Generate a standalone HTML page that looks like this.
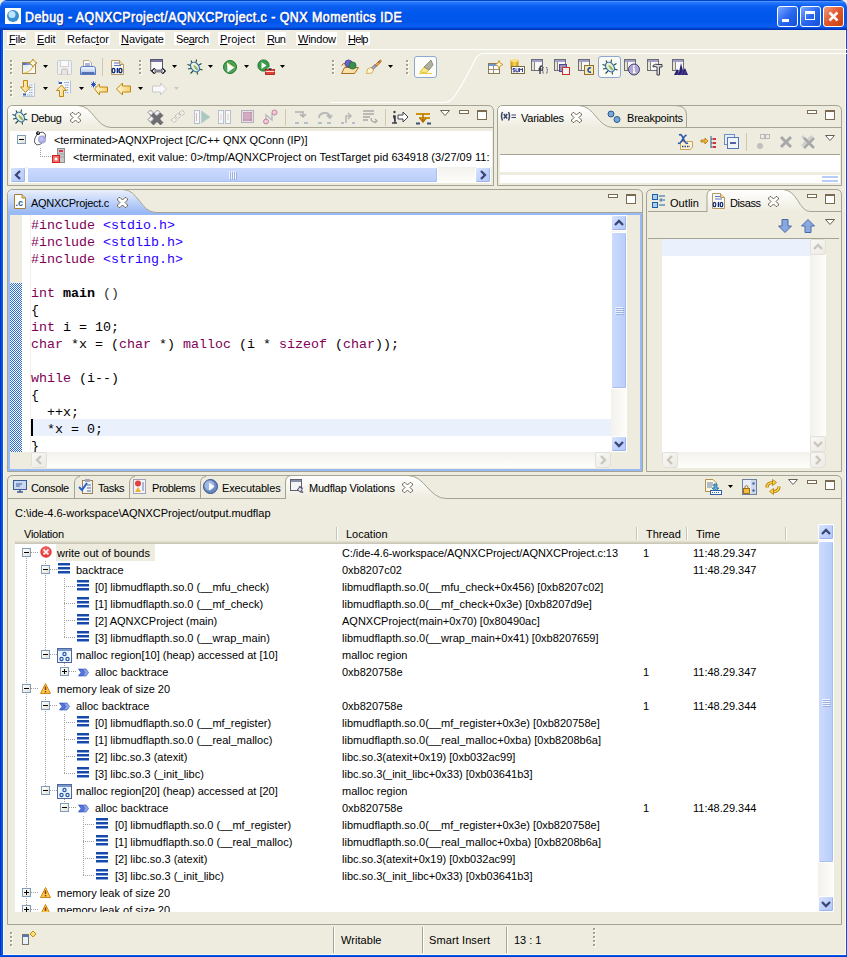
<!DOCTYPE html><html><head><meta charset="utf-8"><style>
html,body{margin:0;padding:0}
body{width:847px;height:957px;overflow:hidden;position:relative;background:#EEECDF;font-family:"Liberation Sans",sans-serif;font-size:11px;color:#000}
body div, body span, body svg{position:absolute}
.t{white-space:pre;line-height:13px}
.m{font-family:"Liberation Mono",monospace;font-size:13.33px;white-space:pre;line-height:17px}
</style></head><body>
<div style="left:0px;top:0px;width:847px;height:30px;background:linear-gradient(#0044CC 0px,#0044CC 1px,#4A90FF 1px,#4A90FF 2px,#2C7BFF 2px,#1A6EF8 4px,#0A5EF0 6px,#0057EC 14px,#0056EA 22px,#0A5EF2 26px,#0050E0 28px,#0038C0 29px,#0030B0 30px);border-radius:7px 7px 0 0"></div>
<svg style="left:5px;top:8px;" width="16" height="16" viewBox="0 0 16 16"><rect x="0" y="0" width="16" height="16" fill="#fff"/><circle cx="8" cy="8" r="6" fill="#3a8fd0"/><circle cx="7" cy="6.5" r="3.5" fill="#bfe6ff"/></svg>
<span class="t" style="left:25px;top:9px;font-weight:normal;-webkit-text-stroke:0.6px #fff;font-size:14px;color:#fff;line-height:16px;text-shadow:1px 1px 0 #0A1E80;letter-spacing:0.5px;transform:scaleX(0.891);transform-origin:0 0">Debug - AQNXCProject/AQNXCProject.c - QNX Momentics IDE</span>
<div style="left:777px;top:6px;width:21px;height:21px;background:linear-gradient(135deg,#7DA8FF,#2A68F0 50%,#1450D8);border:1px solid #fff;border-radius:3px;box-sizing:border-box"></div>
<div style="left:782px;top:19px;width:7px;height:3px;background:#fff"></div>
<div style="left:800px;top:6px;width:21px;height:21px;background:linear-gradient(135deg,#7DA8FF,#2A68F0 50%,#1450D8);border:1px solid #fff;border-radius:3px;box-sizing:border-box"></div>
<div style="left:805px;top:11px;width:10px;height:9px;border:1px solid #fff;border-top-width:3px;box-sizing:border-box"></div>
<div style="left:823px;top:6px;width:21px;height:21px;background:linear-gradient(135deg,#F29C7D,#E0562A 50%,#C9400F);border:1px solid #fff;border-radius:3px;box-sizing:border-box"></div>
<svg style="left:828px;top:11px;" width="11" height="11" viewBox="0 0 11 11"><path d="M1.5 1.5L9.5 9.5M9.5 1.5L1.5 9.5" stroke="#fff" stroke-width="2.5"/></svg>
<div style="left:0px;top:30px;width:3px;height:927px;background:linear-gradient(90deg,#0030B8 0,#0030B8 1px,#0058EE 1px)"></div>
<div style="left:3px;top:30px;width:1px;height:923px;background:#FCF8EC"></div>
<div style="left:846px;top:30px;width:1px;height:927px;background:#0050E8"></div>
<div style="left:845px;top:30px;width:1px;height:925px;background:#FCF8EC"></div>
<div style="left:3px;top:954px;width:843px;height:1px;background:#FCF8EC"></div>
<div style="left:0px;top:955px;width:847px;height:2px;background:linear-gradient(#0058EE 0,#0058EE 1px,#0040D0 1px)"></div>
<div style="left:7px;top:32px;width:19px;height:13px;background:#fff"></div>
<span class="t" style="left:9px;top:33px;color:#000;letter-spacing:-0.250px"><u>F</u>ile</span>
<div style="left:35px;top:32px;width:21px;height:13px;background:#fff"></div>
<span class="t" style="left:37px;top:33px;color:#000;letter-spacing:-0.156px"><u>E</u>dit</span>
<div style="left:65px;top:32px;width:45px;height:13px;background:#fff"></div>
<span class="t" style="left:67px;top:33px;color:#000;letter-spacing:0.058px">Refac<u>t</u>or</span>
<div style="left:119px;top:32px;width:46px;height:13px;background:#fff"></div>
<span class="t" style="left:121px;top:33px;color:#000;letter-spacing:-0.062px"><u>N</u>avigate</span>
<div style="left:174px;top:32px;width:36px;height:13px;background:#fff"></div>
<span class="t" style="left:176px;top:33px;color:#000;letter-spacing:-0.375px">Se<u>a</u>rch</span>
<div style="left:218px;top:32px;width:38px;height:13px;background:#fff"></div>
<span class="t" style="left:220px;top:33px;color:#000;letter-spacing:0.125px"><u>P</u>roject</span>
<div style="left:265px;top:32px;width:21px;height:13px;background:#fff"></div>
<span class="t" style="left:267px;top:33px;color:#000;letter-spacing:-0.602px"><u>R</u>un</span>
<div style="left:296px;top:32px;width:41px;height:13px;background:#fff"></div>
<span class="t" style="left:298px;top:33px;color:#000;letter-spacing:-0.228px"><u>W</u>indow</span>
<div style="left:346px;top:32px;width:24px;height:13px;background:#fff"></div>
<span class="t" style="left:348px;top:33px;color:#000;letter-spacing:-0.714px"><u>H</u>elp</span>
<div style="left:4px;top:49px;width:839px;height:1px;background:#fff"></div>
<div style="left:10px;top:60px;width:2px;height:2px;background:#A6A08B;box-shadow:1px 1px 0 #fff"></div>
<div style="left:10px;top:64px;width:2px;height:2px;background:#A6A08B;box-shadow:1px 1px 0 #fff"></div>
<div style="left:10px;top:68px;width:2px;height:2px;background:#A6A08B;box-shadow:1px 1px 0 #fff"></div>
<div style="left:10px;top:72px;width:2px;height:2px;background:#A6A08B;box-shadow:1px 1px 0 #fff"></div>
<div style="left:10px;top:82px;width:2px;height:2px;background:#A6A08B;box-shadow:1px 1px 0 #fff"></div>
<div style="left:10px;top:86px;width:2px;height:2px;background:#A6A08B;box-shadow:1px 1px 0 #fff"></div>
<div style="left:10px;top:90px;width:2px;height:2px;background:#A6A08B;box-shadow:1px 1px 0 #fff"></div>
<div style="left:10px;top:94px;width:2px;height:2px;background:#A6A08B;box-shadow:1px 1px 0 #fff"></div>
<div style="left:139px;top:60px;width:2px;height:2px;background:#A6A08B;box-shadow:1px 1px 0 #fff"></div>
<div style="left:139px;top:64px;width:2px;height:2px;background:#A6A08B;box-shadow:1px 1px 0 #fff"></div>
<div style="left:139px;top:68px;width:2px;height:2px;background:#A6A08B;box-shadow:1px 1px 0 #fff"></div>
<div style="left:139px;top:72px;width:2px;height:2px;background:#A6A08B;box-shadow:1px 1px 0 #fff"></div>
<div style="left:332px;top:60px;width:2px;height:2px;background:#A6A08B;box-shadow:1px 1px 0 #fff"></div>
<div style="left:332px;top:64px;width:2px;height:2px;background:#A6A08B;box-shadow:1px 1px 0 #fff"></div>
<div style="left:332px;top:68px;width:2px;height:2px;background:#A6A08B;box-shadow:1px 1px 0 #fff"></div>
<div style="left:332px;top:72px;width:2px;height:2px;background:#A6A08B;box-shadow:1px 1px 0 #fff"></div>
<div style="left:406px;top:60px;width:2px;height:2px;background:#A6A08B;box-shadow:1px 1px 0 #fff"></div>
<div style="left:406px;top:64px;width:2px;height:2px;background:#A6A08B;box-shadow:1px 1px 0 #fff"></div>
<div style="left:406px;top:68px;width:2px;height:2px;background:#A6A08B;box-shadow:1px 1px 0 #fff"></div>
<div style="left:406px;top:72px;width:2px;height:2px;background:#A6A08B;box-shadow:1px 1px 0 #fff"></div>
<svg style="left:22px;top:58px;" width="16" height="17" viewBox="0 0 16 17"><defs><linearGradient id="nwt" x1="0" x2="1"><stop offset="0" stop-color="#3A6AC0"/><stop offset="1" stop-color="#C8D8F0"/></linearGradient><linearGradient id="nwf" x1="0" y1="0" x2="1" y2="1"><stop offset="0" stop-color="#D8E8F8"/><stop offset="1" stop-color="#FFFFFF"/></linearGradient></defs><rect x="0.5" y="4.5" width="13" height="11" fill="url(#nwf)" stroke="#A88848"/><rect x="1" y="5" width="12" height="2" fill="url(#nwt)"/><path d="M2 15Q9 14 11 8" stroke="#F0C860" fill="none" stroke-width="1.2"/><path d="M11 1L12.5 3.5L15 5L12.5 6.5L11 9L9.5 6.5L7 5L9.5 3.5Z" fill="#FFF8E0" stroke="#B88010" stroke-width="0.9"/></svg>
<svg style="left:43px;top:65px;" width="5" height="3" viewBox="0 0 5 3"><path d="M0 0H5L2.5 3Z" fill="#000"/></svg>
<svg style="left:57px;top:60px;" width="15" height="15" viewBox="0 0 15 15"><rect x="0.5" y="0.5" width="14" height="14" rx="1" fill="#F0F0F0" stroke="#C4CCD8"/><rect x="3.5" y="0.5" width="8" height="6" fill="#FAFAFA" stroke="#D0D0D8"/><path d="M4.5 14.5V10.5Q4.5 9 6 9H9Q10.5 9 10.5 10.5V14.5" fill="#E8E4E0" stroke="#C8B8B8"/></svg>
<svg style="left:80px;top:60px;" width="16" height="15" viewBox="0 0 16 15"><defs><linearGradient id="prb" x1="0" y1="0" x2="0" y2="1"><stop offset="0" stop-color="#F4F8FF"/><stop offset="0.6" stop-color="#C8D8F4"/><stop offset="1" stop-color="#5878C0"/></linearGradient></defs><path d="M3.5 0.5H9L11.5 3V8.5H3.5Z" fill="#fff" stroke="#B8A888"/><path d="M5 4H10M5 6H10" stroke="#5070B8" stroke-width="1.2"/><path d="M0.5 8.5Q0.5 6.5 2.5 6.5H13.5Q15.5 6.5 15.5 8.5V14.5H0.5Z" fill="url(#prb)" stroke="#5C7CC0"/><path d="M2 13H14" stroke="#4060A8" stroke-width="1.5"/></svg>
<div style="left:102px;top:58px;width:1px;height:18px;background:#D2C6AC"></div>
<svg style="left:111px;top:60px;" width="15" height="15" viewBox="0 0 15 15"><path d="M0.5 0.5H8.5L12.5 4.5V14.5H0.5Z" fill="#F8F8F4" stroke="#B89860"/><path d="M8.5 0.5V4.5H12.5" fill="#F0D8A0" stroke="#B89860"/><path d="M3 3H8M3 5.5H10" stroke="#5878C0" stroke-width="1.1"/><ellipse cx="2.5" cy="10.5" rx="1.4" ry="2.2" fill="none" stroke="#102878" stroke-width="1.3"/><path d="M6.5 8V13" stroke="#102878" stroke-width="1.6"/><ellipse cx="9.5" cy="10.5" rx="1.4" ry="2.2" fill="none" stroke="#102878" stroke-width="1.3"/></svg>
<svg style="left:150px;top:59px;" width="17" height="15" viewBox="0 0 17 15"><rect x="0.5" y="0.5" width="12" height="11" fill="#FAFAFA" stroke="#585868"/><rect x="1" y="1" width="11" height="2" fill="#7878A8"/><path d="M1 3V11" stroke="#B8B8A0"/><path d="M2.5 12H14.5M5 9.5L2.5 12L5 14.5M12 9.5L14.5 12L12 14.5" stroke="#202030" stroke-width="2.4" fill="none"/><path d="M3 12H14M5 10.5L3 12L5 13.5M12 10.5L14 12L12 13.5" stroke="#fff" stroke-width="0.9" fill="none"/></svg>
<svg style="left:172px;top:65px;" width="5" height="3" viewBox="0 0 5 3"><path d="M0 0H5L2.5 3Z" fill="#000"/></svg>
<svg style="left:187px;top:59px;" width="16" height="16" viewBox="0 0 16 16"><path d="M4 1.5L5.5 4.5M9.5 0.5L9 3.5M0.5 5.5L3.5 6.5M14.5 4.5L12 6M1 10L4 9.5M15.5 11L12.5 10M3.5 14.5L6 12M10.5 15.5L10 12.5" stroke="#1A4A2A" stroke-width="1.1"/><ellipse cx="8" cy="8" rx="3.8" ry="5.4" transform="rotate(-40 8 8)" fill="#F0F0D0" stroke="#2A68B0" stroke-width="1.1"/><ellipse cx="8.8" cy="8.8" rx="1.1" ry="3.2" transform="rotate(-40 8.8 8.8)" fill="#88B878"/></svg>
<svg style="left:208px;top:65px;" width="5" height="3" viewBox="0 0 5 3"><path d="M0 0H5L2.5 3Z" fill="#000"/></svg>
<svg style="left:223px;top:60px;" width="15" height="15" viewBox="0 0 15 15"><circle cx="7" cy="7" r="6.5" fill="#3A9A4A" stroke="#1E7A30"/><circle cx="7" cy="7" r="5" fill="none" stroke="#68B070" stroke-width="0.8"/><path d="M4 2.5L11.5 7.5L4.5 12.5Z" fill="#fff"/><path d="M4 2.5L11.5 7.5" stroke="#E8C040" stroke-width="0.8"/></svg>
<svg style="left:244px;top:65px;" width="5" height="3" viewBox="0 0 5 3"><path d="M0 0H5L2.5 3Z" fill="#000"/></svg>
<svg style="left:257px;top:59px;" width="18" height="16" viewBox="0 0 18 16"><circle cx="6.5" cy="6.5" r="5.6" fill="#3A9A4A" stroke="#1E7A30"/><path d="M4.5 3L9.5 6.5L4.5 10Z" fill="#fff"/><rect x="8.5" y="10.5" width="9" height="5" fill="#E04038" stroke="#A01810" stroke-width="0.8"/><path d="M11 10.5V9H15V10.5M8.5 12.5H17.5" stroke="#fff" stroke-width="0.8"/></svg>
<svg style="left:280px;top:65px;" width="5" height="3" viewBox="0 0 5 3"><path d="M0 0H5L2.5 3Z" fill="#000"/></svg>
<svg style="left:341px;top:59px;" width="18" height="15" viewBox="0 0 18 15"><path d="M0.5 6.5L2.5 4.5H7L8 6.5H13.5V9" fill="#F0D8A0" stroke="#A87020"/><path d="M0.5 14.5L3.5 8.5H17.5L13.5 14.5Z" fill="#F8E0A8" stroke="#A87020"/><circle cx="7.5" cy="4.5" r="3.6" fill="#6A60C8" stroke="#403890" stroke-width="0.7"/><circle cx="11.5" cy="6.5" r="3.6" fill="#3A9050" stroke="#206030" stroke-width="0.7"/></svg>
<svg style="left:366px;top:59px;" width="16" height="15" viewBox="0 0 16 15"><path d="M9 6L14 1Q16 1 15 3L10 8Z" fill="#F0A040" stroke="#C07010" stroke-width="0.8"/><path d="M5 9L9 5.5L10.5 7L7 11Z" fill="#A8A0C0" stroke="#707080" stroke-width="0.8"/><path d="M0.5 14.5L1.5 10L5 8.5L7.5 11L6 14Z" fill="#FFF8D0" stroke="#D0A040" stroke-width="0.8"/><circle cx="13" cy="3" r="0.8" fill="#2050A0"/></svg>
<svg style="left:388px;top:65px;" width="5" height="3" viewBox="0 0 5 3"><path d="M0 0H5L2.5 3Z" fill="#000"/></svg>
<div style="left:414px;top:56px;width:23px;height:22px;background:#FCFCFA;border:1px solid #8CA8D0;border-radius:3px;box-sizing:border-box"></div>
<svg style="left:418px;top:59px;" width="16" height="15" viewBox="0 0 16 15"><path d="M2 13L6 8L11 11L8 14Z" fill="#F8E880" stroke="#D8B830" stroke-width="0.8"/><path d="M6 8L13 1L15 6L11 11Z" fill="#B0B0A0" stroke="#808070" stroke-width="0.8"/><path d="M1 14.5H14" stroke="#E8D040" stroke-width="1.2"/></svg>
<svg style="left:20px;top:80px;" width="16" height="17" viewBox="0 0 16 17"><defs><linearGradient id="ag1" x1="0" y1="0" x2="1" y2="0"><stop offset="0" stop-color="#FFF8D8"/><stop offset="1" stop-color="#F8D070"/></linearGradient></defs><rect x="2.5" y="3.5" width="12" height="13" fill="#F4F8FC"/><path d="M14.5 3V16.5M2.5 16.5H14.5" stroke="#B8C4D4"/><path d="M9 5H13M9 7.5H13M9 10H13M9 12.5H13M7 15H13" stroke="#90A8D0" stroke-dasharray="1.5 0.5"/><rect x="3" y="13.5" width="3" height="2" fill="#3060B0"/><path d="M3.5 0.5H7.5V7H10.5L5.5 12.5L0.5 7H3.5Z" fill="url(#ag1)" stroke="#C08810"/></svg>
<svg style="left:43px;top:87px;" width="5" height="3" viewBox="0 0 5 3"><path d="M0 0H5L2.5 3Z" fill="#000"/></svg>
<svg style="left:56px;top:80px;" width="16" height="17" viewBox="0 0 16 17"><defs><linearGradient id="ag2" x1="0" y1="0" x2="1" y2="0"><stop offset="0" stop-color="#FFF8D8"/><stop offset="1" stop-color="#F8D070"/></linearGradient></defs><rect x="2.5" y="0.5" width="12" height="13" fill="#F4F8FC"/><path d="M14.5 0.5V13.5M2.5 0.5V4" stroke="#B8C4D4"/><rect x="3" y="2" width="3" height="2" fill="#3060B0"/><path d="M8 2.5H13M9 5H13M9 7.5H13M9 10H13M9 12.5H13" stroke="#90A8D0" stroke-dasharray="1.5 0.5"/><path d="M3.5 16.5V10.5H0.5L5.5 5L10.5 10.5H7.5V16.5Z" fill="url(#ag2)" stroke="#C08810"/></svg>
<svg style="left:79px;top:87px;" width="5" height="3" viewBox="0 0 5 3"><path d="M0 0H5L2.5 3Z" fill="#000"/></svg>
<svg style="left:91px;top:81px;" width="17" height="15" viewBox="0 0 17 15"><defs><linearGradient id="ag3" x1="0" y1="0" x2="1" y2="0"><stop offset="0" stop-color="#FFF8D8"/><stop offset="1" stop-color="#F8D070"/></linearGradient></defs><path d="M0.5 1.5L4.5 5.5M2.5 0.5V6.5M0 3.5H5M4.5 1.5L0.5 5.5" stroke="#2850C0" stroke-width="1"/><path d="M3.5 8L8.5 3V6H16.5V11H8.5V14Z" fill="url(#ag3)" stroke="#C08810"/></svg>
<svg style="left:116px;top:81px;" width="15" height="15" viewBox="0 0 15 15"><defs><linearGradient id="ag4" x1="0" y1="0" x2="1" y2="0"><stop offset="0" stop-color="#FFF8D8"/><stop offset="1" stop-color="#F8D070"/></linearGradient></defs><path d="M0.5 8L6.5 2V5H14.5V11H6.5V14Z" fill="url(#ag4)" stroke="#C08810"/></svg>
<svg style="left:138px;top:87px;" width="5" height="3" viewBox="0 0 5 3"><path d="M0 0H5L2.5 3Z" fill="#000"/></svg>
<svg style="left:152px;top:81px;" width="15" height="15" viewBox="0 0 15 15"><path d="M14.5 8L8.5 2V5H0.5V11H8.5V14Z" fill="#F8F8F8" stroke="#C8C8C8"/></svg>
<svg style="left:174px;top:87px;" width="5" height="3" viewBox="0 0 5 3"><path d="M0 0H5L2.5 3Z" fill="#C8C8C8"/></svg>
<svg style="left:300px;top:48px;" width="547" height="56" viewBox="0 0 547 56"><path d="M130 1.5H547" stroke="#fff" stroke-width="1"/><path d="M30 54.5H142C150 54.5 152 52 156 46C164 34 170 22 176 10C178 7 180 5.5 184 5.5H547" stroke="#fff" fill="none" stroke-width="1.1"/></svg>
<svg style="left:488px;top:60px;" width="16" height="15" viewBox="0 0 16 15"><rect x="0.5" y="3.5" width="11" height="10" fill="#F8FAFC" stroke="#8A7A50"/><rect x="1" y="4" width="10" height="2" fill="#6A98D8"/><path d="M1 9.5H11M5.5 6V13" stroke="#A09070"/><path d="M11 0.5L12.3 3.2L15 4.5L12.3 5.8L11 8.5L9.7 5.8L7 4.5L9.7 3.2Z" fill="#FFF8D8" stroke="#C89018" stroke-width="0.9"/></svg>
<svg style="left:510px;top:59px;" width="16" height="16" viewBox="0 0 16 16"><defs><linearGradient id="sumg" x1="0" x2="1"><stop offset="0" stop-color="#C89010"/><stop offset="0.5" stop-color="#F8D850"/><stop offset="1" stop-color="#C89010"/></linearGradient></defs><rect x="0.5" y="1" width="8" height="9" fill="url(#sumg)"/><ellipse cx="4.5" cy="1.5" rx="4" ry="1.5" fill="#F8E080"/><rect x="1.5" y="7.5" width="13" height="7" fill="#fff" stroke="#7A6A40"/><path d="M5 9.5H3V11H4.8V12.8H2.8M6 9.3V12.8H8.3V9.3M9.5 13V9.3L11 11L12.5 9.3V13" fill="none" stroke="#202880" stroke-width="0.9"/></svg>
<svg style="left:531px;top:59px;" width="17" height="17" viewBox="0 0 17 17"><rect x="0.5" y="0.5" width="11" height="11" fill="#F8F8F8" stroke="#6E6C78"/><rect x="1" y="1" width="10" height="2" fill="#A0A0C8"/><path d="M3.5 3V11" stroke="#8A8878"/><rect x="1" y="3" width="2" height="8" fill="#E8E4D0"/><path d="M9 15V9Q9 7 11 7M7.5 10H10.5" fill="none" stroke="#303040" stroke-width="1.3"/><path d="M12.5 8Q11 11 12.5 15M15.5 8Q17 11 15.5 15" fill="none" stroke="#303040" stroke-width="1" stroke-dasharray="1.2 0.6"/></svg>
<svg style="left:554px;top:59px;" width="17" height="17" viewBox="0 0 17 17"><rect x="0.5" y="0.5" width="11" height="11" fill="#F8F8F8" stroke="#6E6C78"/><rect x="1" y="1" width="10" height="2" fill="#A0A0C8"/><path d="M3.5 3V11" stroke="#8A8878"/><rect x="1" y="3" width="2" height="8" fill="#E8E4D0"/><rect x="5.5" y="5.5" width="7" height="7" fill="#9890C0" stroke="#504890"/><rect x="8.5" y="8.5" width="7" height="7" fill="#F4F4F8" stroke="#D03020"/></svg>
<svg style="left:578px;top:59px;" width="17" height="17" viewBox="0 0 17 17"><rect x="0.5" y="0.5" width="11" height="11" fill="#F8F8F8" stroke="#6E6C78"/><rect x="1" y="1" width="10" height="2" fill="#A0A0C8"/><path d="M3.5 3V11" stroke="#8A8878"/><rect x="1" y="3" width="2" height="8" fill="#E8E4D0"/><rect x="6.5" y="6.5" width="9" height="9" fill="#F8E8B0" stroke="#907030"/><path d="M13 9Q11.5 8.5 10.5 9.5Q9.5 11 10.5 12.5Q11.5 13.5 13 13" fill="none" stroke="#2050B0" stroke-width="1.6"/></svg>
<div style="left:598px;top:56px;width:23px;height:22px;background:#FAFAF7;border:1px solid #8CA8D0;border-radius:3px;box-sizing:border-box"></div>
<svg style="left:602px;top:59px;" width="16" height="16" viewBox="0 0 16 16"><path d="M4 1.5L5.5 4.5M9.5 0.5L9 3.5M0.5 5.5L3.5 6.5M14.5 4.5L12 6M1 10L4 9.5M15.5 11L12.5 10M3.5 14.5L6 12M10.5 15.5L10 12.5" stroke="#1A4A2A" stroke-width="1.1"/><ellipse cx="8" cy="8" rx="3.8" ry="5.4" transform="rotate(-40 8 8)" fill="#F0F0D0" stroke="#2A68B0" stroke-width="1.1"/><ellipse cx="8.8" cy="8.8" rx="1.1" ry="3.2" transform="rotate(-40 8.8 8.8)" fill="#88B878"/></svg>
<svg style="left:624px;top:59px;" width="17" height="17" viewBox="0 0 17 17"><rect x="0.5" y="0.5" width="11" height="11" fill="#F8F8F8" stroke="#6E6C78"/><rect x="1" y="1" width="10" height="2" fill="#A0A0C8"/><path d="M3.5 3V11" stroke="#8A8878"/><rect x="1" y="3" width="2" height="8" fill="#E8E4D0"/><circle cx="10" cy="10.5" r="5.5" fill="#B0A8D0" stroke="#404070"/><path d="M10 9V13.5M9 13.5H11.5M9 9H10" stroke="#fff" stroke-width="1.4"/><circle cx="10" cy="7" r="0.9" fill="#fff"/></svg>
<svg style="left:647px;top:59px;" width="17" height="17" viewBox="0 0 17 17"><rect x="0.5" y="0.5" width="11" height="11" fill="#F8F8F8" stroke="#6E6C78"/><rect x="1" y="1" width="10" height="2" fill="#A0A0C8"/><path d="M3.5 3V11" stroke="#8A8878"/><rect x="1" y="3" width="2" height="8" fill="#E8E4D0"/><path d="M6 6.5Q8 4.5 12 5.5H15V8H12.5V16H10V8Q8 7 6 8Z" fill="#D8D8E0" stroke="#303038" stroke-width="0.9"/></svg>
<svg style="left:672px;top:59px;" width="17" height="17" viewBox="0 0 17 17"><rect x="0.5" y="0.5" width="11" height="11" fill="#F8F8F8" stroke="#6E6C78"/><rect x="1" y="1" width="10" height="2" fill="#A0A0C8"/><path d="M3.5 3V11" stroke="#8A8878"/><rect x="1" y="3" width="2" height="8" fill="#E8E4D0"/><path d="M2 16L5 10L7 13L9 4L11 12L13 9L16 16Z" fill="#282070"/><path d="M5 16L8 11M9 16L11 12M12 16L14 12" stroke="#6A60B0" stroke-width="0.8"/></svg>
<svg style="left:7px;top:105px;" width="487" height="81" viewBox="0 0 487 81"><path d="M0.5 80.5V6Q0.5 0.5 6 0.5H481Q486.5 0.5 486.5 6V80.5Z" fill="#EEECDF" stroke="#A5A391"/></svg>
<svg style="left:7px;top:105px;" width="487" height="24" viewBox="0 0 487 24"><defs><linearGradient id="gdbg" x1="0" y1="0" x2="0" y2="1"><stop offset="0" stop-color="#FFFFFF"/><stop offset="1" stop-color="#EEECDF"/></linearGradient></defs><path d="M1 23V6Q1 1 6 1H71C85.85 1 89.15 22.5 104 22.5V23Z" fill="url(#gdbg)"/><path d="M71 0.5C85.85 0.5 89.15 22.5 104 22.5H486" fill="none" stroke="#A5A391"/></svg>
<svg style="left:12px;top:109px;" width="16" height="16" viewBox="0 0 16 16"><path d="M4 1.5L5.5 4.5M9.5 0.5L9 3.5M0.5 5.5L3.5 6.5M14.5 4.5L12 6M1 10L4 9.5M15.5 11L12.5 10M3.5 14.5L6 12M10.5 15.5L10 12.5" stroke="#1A4A2A" stroke-width="1.1"/><ellipse cx="8" cy="8" rx="3.8" ry="5.4" transform="rotate(-40 8 8)" fill="#F0F0D0" stroke="#2A68B0" stroke-width="1.1"/><ellipse cx="8.8" cy="8.8" rx="1.1" ry="3.2" transform="rotate(-40 8.8 8.8)" fill="#88B878"/></svg>
<span class="t" style="left:31px;top:112px;;letter-spacing:-0.405px">Debug</span>
<svg style="left:70px;top:112px;" width="12" height="11" viewBox="0 0 12 11"><path d="M0.5 2L2 0.5H3L5.5 3L8 0.5H9L10.5 2V3L8 5.5L10.5 8V9L9 10.5H8L5.5 8L3 10.5H2L0.5 9V8L3 5.5L0.5 3Z" fill="#fff" stroke="#6E6656" stroke-width="1"/></svg>
<div style="left:10px;top:131px;width:482px;height:36px;background:#fff"></div>
<div style="left:17px;top:135px;width:9px;height:9px;background:linear-gradient(135deg,#fff,#E4E2D6);border:1px solid #7F9DB9;box-sizing:border-box"></div>
<div style="left:19px;top:139px;width:5px;height:1px;background:#000"></div>
<svg style="left:32px;top:131px;" width="17" height="15" viewBox="0 0 17 15"><ellipse cx="8" cy="7.5" rx="4.6" ry="7" transform="rotate(35 8 7.5)" fill="none" stroke="#505058" stroke-width="0.9"/><circle cx="10" cy="8.5" r="4" fill="#A8A8E0"/><circle cx="9.5" cy="8" r="2.2" fill="#C0C0F0"/><circle cx="6" cy="2.2" r="1.9" fill="#101010"/><circle cx="6.3" cy="2" r="0.7" fill="#fff"/></svg>
<span class="t" style="left:54px;top:134px;;letter-spacing:-0.073px">&lt;terminated&gt;AQNXProject [C/C++ QNX QConn (IP)]</span>
<div style="left:40px;top:148px;width:1px;height:8px;background:repeating-linear-gradient(#A0A0A0 0 1px,transparent 1px 2px)"></div>
<div style="left:40px;top:156px;width:12px;height:1px;background:repeating-linear-gradient(90deg,#A0A0A0 0 1px,transparent 1px 2px)"></div>
<svg style="left:52px;top:148px;" width="13" height="15" viewBox="0 0 13 15"><rect x="5.5" y="0.5" width="7" height="14" fill="#C8C8C8" stroke="#909090"/><rect x="7" y="2" width="4" height="2" fill="#E03050"/><path d="M6 6H12M6 9H12" stroke="#A0A0A0"/><rect x="0.5" y="7.5" width="7" height="7" fill="#F07070" stroke="#D02020"/><circle cx="4" cy="11" r="1.5" fill="#fff"/></svg>
<div style="left:0;top:0;width:491px;height:170px;overflow:hidden">
<span class="t" style="left:73px;top:151px;;letter-spacing:0.021px">&lt;terminated, exit value: 0&gt;/tmp/AQNXCProject on TestTarget pid 634918 (3/27/09 11:</span>
</div>
<div style="left:10px;top:167px;width:481px;height:16px;background:linear-gradient(#F3F1EC,#FEFEFB)"></div>
<div style="left:10px;top:167px;width:16px;height:16px;background:linear-gradient(135deg,#D8E4FE 0%,#C2D3FC 50%,#B4C8F8 100%);border:1px solid #fff;border-radius:2px;box-sizing:border-box;box-shadow:inset -1px -1px 0 #9EB4E8"></div>
<svg style="left:10px;top:167px;" width="16" height="16" viewBox="0 0 16 16"><path d="M10.0 4.0L6.0 8.0L10.0 12.0" fill="none" stroke="#3A4677" stroke-width="2.3"/></svg>
<div style="left:475px;top:167px;width:16px;height:16px;background:linear-gradient(135deg,#D8E4FE 0%,#C2D3FC 50%,#B4C8F8 100%);border:1px solid #fff;border-radius:2px;box-sizing:border-box;box-shadow:inset -1px -1px 0 #9EB4E8"></div>
<svg style="left:475px;top:167px;" width="16" height="16" viewBox="0 0 16 16"><path d="M6.0 4.0L10.0 8.0L6.0 12.0" fill="none" stroke="#3A4677" stroke-width="2.3"/></svg>
<div style="left:27px;top:167px;width:411px;height:16px;background:linear-gradient(#CCDAFD,#B9CDFA);border:1px solid #fff;border-radius:2px;box-sizing:border-box;box-shadow:inset -1px -1px 0 #A8BEF0"></div>
<div style="left:229px;top:171px;width:1px;height:8px;background:#EEF4FE;box-shadow:1px 1px 0 #9CB2E4"></div>
<div style="left:231px;top:171px;width:1px;height:8px;background:#EEF4FE;box-shadow:1px 1px 0 #9CB2E4"></div>
<div style="left:233px;top:171px;width:1px;height:8px;background:#EEF4FE;box-shadow:1px 1px 0 #9CB2E4"></div>
<div style="left:235px;top:171px;width:1px;height:8px;background:#EEF4FE;box-shadow:1px 1px 0 #9CB2E4"></div>
<svg style="left:147px;top:109px;" width="17" height="16" viewBox="0 0 17 16"><path d="M1 3.5L3.5 1L7 4.5L10.5 1L13 3.5L9.5 7L13 10.5L10.5 13L7 9.5L3.5 13L1 10.5L4.5 7Z" fill="#F4F4F4" stroke="#8A8A90" stroke-width="1"/><path d="M4 6.5L6.5 4L10 7.5L13.5 4L16 6.5L12.5 10L16 13.5L13.5 16L10 12.5L6.5 16L4 13.5L7.5 10Z" fill="#6E6E74" stroke="#505058" stroke-width="0.6"/></svg>
<svg style="left:170px;top:109px;" width="17" height="16" viewBox="0 0 17 16"><path d="M1 11L4 8L7 11L4 14ZM5 7L8 4L11 7L8 10ZM9 4L12 1L15 4L12 7Z" fill="none" stroke="#A8A8A8" stroke-dasharray="1 1"/></svg>
<svg style="left:194px;top:110px;" width="17" height="14" viewBox="0 0 17 14"><rect x="0.5" y="0.5" width="5" height="13" fill="#F8F8F8" stroke="#B8C0D0"/><path d="M2.5 3V11" stroke="#E0B0B8"/><path d="M7.5 1L16 7L7.5 13Z" fill="#A8C8C0" stroke="#C0D0D0"/></svg>
<svg style="left:218px;top:110px;" width="13" height="14" viewBox="0 0 13 14"><rect x="0.5" y="0.5" width="5" height="13" fill="#F8F8F8" stroke="#B8C0D0"/><rect x="7.5" y="0.5" width="5" height="13" fill="#F8F8F8" stroke="#B8C0D0"/><path d="M3 4V10M10 4V10" stroke="#E8C8C8"/></svg>
<svg style="left:241px;top:110px;" width="13" height="13" viewBox="0 0 13 13"><rect x="0.5" y="0.5" width="12" height="12" fill="#E8E0E8" stroke="#B8B0B8"/><rect x="2" y="2" width="9" height="9" fill="#C090A8"/><path d="M2 4H11M2 6H11M2 8H11M4 2V11M6 2V11M8 2V11" stroke="#E0C8D8" stroke-width="0.6"/></svg>
<svg style="left:262px;top:109px;" width="16" height="16" viewBox="0 0 16 16"><path d="M4 13V6L10 11V4" fill="none" stroke="#B8B8C4" stroke-width="1.4"/><circle cx="4" cy="12.5" r="2.5" fill="#F0C8D8" stroke="#C08898"/><circle cx="12.5" cy="3.5" r="2.5" fill="#F0C8D8" stroke="#C08898"/></svg>
<div style="left:285px;top:109px;width:1px;height:17px;background:#D2C6AC"></div>
<svg style="left:294px;top:110px;" width="16" height="15" viewBox="0 0 16 15"><path d="M1 2H9V7M6 4L9 7L12 4" fill="none" stroke="#B0B0B0" stroke-width="1.5"/><path d="M1 13H5M10 13H14" stroke="#A0B0C8" stroke-width="1.5"/></svg>
<svg style="left:317px;top:110px;" width="16" height="15" viewBox="0 0 16 15"><path d="M2 8C2 2 12 1 13 7M10 5L13 8L15 5" fill="none" stroke="#B8B8B8" stroke-width="1.8"/><path d="M1 13H5M10 13H14" stroke="#A0B0C8" stroke-width="1.5"/></svg>
<svg style="left:340px;top:110px;" width="16" height="15" viewBox="0 0 16 15"><path d="M6 13V6H11M8 3L11 6L8 9" fill="none" stroke="#B8B8B8" stroke-width="1.6"/><path d="M1 13H4M12 13H15" stroke="#A0B0C8" stroke-width="1.5"/></svg>
<svg style="left:362px;top:109px;" width="17" height="16" viewBox="0 0 17 16"><path d="M1 2H12M1 5H12M1 8H8M1 11H6" stroke="#A8A8A8" stroke-width="1.5"/><path d="M9 9C9 13 12 14 15 12M13 10L15 12L13 14" fill="none" stroke="#A8A8A8" stroke-width="1.3"/></svg>
<div style="left:385px;top:109px;width:1px;height:17px;background:#D2C6AC"></div>
<svg style="left:392px;top:110px;" width="17" height="14" viewBox="0 0 17 14"><path d="M2 3V3M1 6H3V13M0 13H5" stroke="#404050" stroke-width="1.6"/><circle cx="2.5" cy="2" r="1.2" fill="#404050"/><path d="M6 5H11V2L16 7L11 12V9H6Z" fill="#fff" stroke="#404050"/></svg>
<svg style="left:415px;top:109px;" width="18" height="16" viewBox="0 0 18 16"><path d="M1 5H15M4 9H15" stroke="#D09010" stroke-width="2"/><path d="M8 5V12M5 9L8 13L11 9" fill="#F0C030" stroke="#B07000" stroke-width="1.5"/><path d="M1 14.5H5M12 14.5H16" stroke="#405070" stroke-width="1.8"/></svg>
<svg style="left:440px;top:110px;" width="10" height="6" viewBox="0 0 10 6"><path d="M0.5 0.5H9.5L5 5.5Z" fill="#fff" stroke="#6A6050"/></svg>
<div style="left:459px;top:110px;width:10px;height:4px;border:1px solid #7A6A50;background:#fff;box-sizing:border-box"></div>
<div style="left:477px;top:110px;width:10px;height:10px;border:1px solid #7A6A50;border-top-width:2px;background:#fff;box-sizing:border-box"></div>
<svg style="left:497px;top:105px;" width="345" height="81" viewBox="0 0 345 81"><path d="M0.5 80.5V6Q0.5 0.5 6 0.5H339Q344.5 0.5 344.5 6V80.5Z" fill="#EEECDF" stroke="#A5A391"/></svg>
<svg style="left:497px;top:105px;" width="345" height="24" viewBox="0 0 345 24"><defs><linearGradient id="gvar" x1="0" y1="0" x2="0" y2="1"><stop offset="0" stop-color="#FFFFFF"/><stop offset="1" stop-color="#EEECDF"/></linearGradient></defs><path d="M1 23V6Q1 1 6 1H82C97.3 1 100.7 22.5 116 22.5V23Z" fill="url(#gvar)"/><path d="M82 0.5C97.3 0.5 100.7 22.5 116 22.5H344" fill="none" stroke="#A5A391"/></svg>
<svg style="left:675px;top:105px;" width="12" height="24" viewBox="0 0 12 24"><path d="M0 0.5Q11.5 0.5 11.5 10V23" fill="none" stroke="#A5A391"/></svg>
<svg style="left:500px;top:111px;" width="18" height="11" viewBox="0 0 18 11"><path d="M2.5 1Q0.5 5 2.5 9.5M8.5 1Q10.5 5 8.5 9.5" fill="none" stroke="#3A4468" stroke-width="1.5"/><path d="M3.8 3L7.2 7.5M7.2 3L3.8 7.5" stroke="#3A4468" stroke-width="1.5"/><path d="M11.5 4H16M11.5 6.5H16" stroke="#3A4468" stroke-width="1.2"/></svg>
<span class="t" style="left:521px;top:112px;;letter-spacing:-0.256px">Variables</span>
<svg style="left:571px;top:112px;" width="12" height="11" viewBox="0 0 12 11"><path d="M0.5 2L2 0.5H3L5.5 3L8 0.5H9L10.5 2V3L8 5.5L10.5 8V9L9 10.5H8L5.5 8L3 10.5H2L0.5 9V8L3 5.5L0.5 3Z" fill="#fff" stroke="#6E6656" stroke-width="1"/></svg>
<svg style="left:607px;top:110px;" width="14" height="14" viewBox="0 0 14 14"><circle cx="4" cy="4" r="3" fill="#78A8D8" stroke="#2A5A90"/><circle cx="10" cy="9.5" r="3" fill="#78A8D8" stroke="#2A5A90"/></svg>
<span class="t" style="left:627px;top:112px;;letter-spacing:-0.209px">Breakpoints</span>
<div style="left:807px;top:110px;width:10px;height:4px;border:1px solid #7A6A50;background:#fff;box-sizing:border-box"></div>
<div style="left:825px;top:110px;width:10px;height:10px;border:1px solid #7A6A50;border-top-width:2px;background:#fff;box-sizing:border-box"></div>
<svg style="left:677px;top:133px;" width="17" height="17" viewBox="0 0 17 17"><path d="M3.5 8.5H15.5V14L13.5 16.5H3.5Z" fill="#FFF4D0" stroke="#C8A060"/><path d="M5 13.5H13" stroke="#2040A0" stroke-dasharray="1.5 1" stroke-width="1.6"/><path d="M2 2Q4 1 5 3L8 9Q9 11 11 10M9.5 2Q7 3 6 6L4 9Q3 11 1 10" fill="none" stroke="#2858B0" stroke-width="1.6"/></svg>
<svg style="left:700px;top:134px;" width="18" height="16" viewBox="0 0 18 16"><path d="M1 6H5V4L8 7L5 10V8H1Z" fill="#F0C040" stroke="#B07000" stroke-width="0.8"/><path d="M11 2V14M11 5H14M11 9H14M11 13H14" stroke="#3060A0"/><rect x="13" y="4" width="3" height="2" fill="#E03030"/><rect x="13" y="8" width="3" height="2" fill="#E03030"/><rect x="13" y="12" width="3" height="2" fill="#E03030"/></svg>
<svg style="left:724px;top:134px;" width="15" height="15" viewBox="0 0 15 15"><rect x="0.5" y="0.5" width="10" height="10" fill="#E8EEF8" stroke="#7090C0"/><rect x="3.5" y="3.5" width="11" height="11" fill="#F0F4FC" stroke="#5078B8"/><path d="M6 9H12" stroke="#203080" stroke-width="1.5"/></svg>
<div style="left:746px;top:133px;width:1px;height:18px;background:#D2C6AC"></div>
<svg style="left:756px;top:134px;" width="14" height="16" viewBox="0 0 14 16"><rect x="4.5" y="0.5" width="4" height="4" fill="none" stroke="#B8B8B8"/><rect x="9.5" y="0.5" width="4" height="4" fill="none" stroke="#B8B8B8"/><circle cx="4" cy="12" r="3" fill="#C0C0C0"/></svg>
<svg style="left:779px;top:135px;" width="14" height="14" viewBox="0 0 14 14"><path d="M2 2L12 12M12 2L2 12" stroke="#A8A8A8" stroke-width="3"/></svg>
<svg style="left:800px;top:134px;" width="16" height="16" viewBox="0 0 16 16"><path d="M2 2L12 12M12 2L2 12" stroke="#D0D0D0" stroke-width="2.5"/><path d="M4 4L14 14M14 4L4 14" stroke="#A8A8A8" stroke-width="2.5"/></svg>
<svg style="left:825px;top:135px;" width="10" height="6" viewBox="0 0 10 6"><path d="M0.5 0.5H9.5L5 5.5Z" fill="#fff" stroke="#6A6050"/></svg>
<div style="left:500px;top:154px;width:340px;height:1px;background:#A5A391"></div>
<div style="left:500px;top:155px;width:340px;height:17px;background:#fff"></div>
<div style="left:500px;top:175px;width:340px;height:8px;background:#fff"></div>
<div style="left:822px;top:176px;width:16px;height:2px;background:#B8CCF8"></div>
<div style="left:822px;top:180px;width:16px;height:2px;background:#B8CCF8"></div>
<svg style="left:7px;top:189px;" width="636" height="283" viewBox="0 0 636 283"><path d="M0.5 282.5V6Q0.5 0.5 6 0.5H630Q635.5 0.5 635.5 6V282.5Z" fill="#EEECDF" stroke="#A5A391"/></svg>
<svg style="left:7px;top:189px;" width="636" height="25" viewBox="0 0 636 25"><defs><linearGradient id="ged" x1="0" y1="0" x2="0" y2="1"><stop offset="0" stop-color="#EAF0FC"/><stop offset="1" stop-color="#98B8F6"/></linearGradient></defs><path d="M1 24V6Q1 1 6 1H116C130.85 1 134.15 23.5 149 23.5V24Z" fill="url(#ged)"/></svg>
<svg style="left:7px;top:189px;" width="636" height="25" viewBox="0 0 636 25"><path d="M116 0.5C131 0.5 134 23.5 149 23.5H635" fill="none" stroke="#A5A391"/></svg>
<svg style="left:14px;top:194px;" width="12" height="15" viewBox="0 0 12 15"><path d="M0.5 0.5H8L11.5 4V14.5H0.5Z" fill="#fff" stroke="#A88030"/><path d="M8 0.5V4H11.5" fill="#F0D090" stroke="#A88030"/><text x="1.5" y="12" font-family="Liberation Sans" font-weight="bold" font-size="9" fill="#206090">.c</text></svg>
<span class="t" style="left:31px;top:197px;;letter-spacing:-0.279px">AQNXCProject.c</span>
<svg style="left:117px;top:197px;" width="12" height="11" viewBox="0 0 12 11"><path d="M0.5 2L2 0.5H3L5.5 3L8 0.5H9L10.5 2V3L8 5.5L10.5 8V9L9 10.5H8L5.5 8L3 10.5H2L0.5 9V8L3 5.5L0.5 3Z" fill="#fff" stroke="#6E6656" stroke-width="1"/></svg>
<div style="left:608px;top:194px;width:10px;height:4px;border:1px solid #7A6A50;background:#fff;box-sizing:border-box"></div>
<div style="left:626px;top:194px;width:10px;height:10px;border:1px solid #7A6A50;border-top-width:2px;background:#fff;box-sizing:border-box"></div>
<div style="left:8px;top:213px;width:634px;height:2px;background:#98B8F6"></div>
<div style="left:8px;top:213px;width:2px;height:258px;background:#98B8F6"></div>
<div style="left:640px;top:213px;width:2px;height:258px;background:#98B8F6"></div>
<div style="left:8px;top:469px;width:634px;height:2px;background:#98B8F6"></div>
<div style="left:10px;top:215px;width:12px;height:237px;background:#EEECDF"></div>
<div style="left:10px;top:283px;width:12px;height:169px;background:repeating-conic-gradient(#2A6ADA 0 25%,#fff 0 50%) 0 0/2px 2px"></div>
<div style="left:22px;top:215px;width:589px;height:237px;background:#fff"></div>
<div style="left:30px;top:215px;width:1px;height:237px;background:#F0EFE8"></div>
<div style="left:31px;top:419px;width:580px;height:17px;background:#EAF0FC"></div>
<div style="left:31px;top:419px;width:2px;height:17px;background:#000"></div>
<div class="m" style="left:31px;top:217px"><b style="color:#7F0055;font-weight:normal">#include</b> <span style="color:#2A00FF">&lt;stdio.h&gt;</span></div>
<div class="m" style="left:31px;top:234px"><b style="color:#7F0055;font-weight:normal">#include</b> <span style="color:#2A00FF">&lt;stdlib.h&gt;</span></div>
<div class="m" style="left:31px;top:251px"><b style="color:#7F0055;font-weight:normal">#include</b> <span style="color:#2A00FF">&lt;string.h&gt;</span></div>
<div class="m" style="left:31px;top:268px"></div>
<div class="m" style="left:31px;top:285px"><b style="color:#7F0055;font-weight:normal">int</b> <b>main</b> <span style="color:#333">()</span></div>
<div class="m" style="left:31px;top:302px">{</div>
<div class="m" style="left:31px;top:319px"><b style="color:#7F0055;font-weight:normal">int</b> i = 10;</div>
<div class="m" style="left:31px;top:336px"><b style="color:#7F0055;font-weight:normal">char</b> *x = (<b style="color:#7F0055;font-weight:normal">char</b> *) <b style="color:#7F0055;font-weight:normal">malloc</b> (i * <b style="color:#7F0055;font-weight:normal">sizeof</b> (<b style="color:#7F0055;font-weight:normal">char</b>));</div>
<div class="m" style="left:31px;top:353px"></div>
<div class="m" style="left:31px;top:370px"><b style="color:#7F0055;font-weight:normal">while</b> (i--)</div>
<div class="m" style="left:31px;top:387px">{</div>
<div class="m" style="left:31px;top:404px">  ++x;</div>
<div class="m" style="left:31px;top:421px">  *x = 0;</div>
<div class="m" style="left:31px;top:438px">}</div>
<div style="left:611px;top:215px;width:29px;height:237px;background:#EEECDF"></div>
<div style="left:611px;top:215px;width:16px;height:237px;background:linear-gradient(90deg,#F3F1EC,#FEFEFB)"></div>
<div style="left:611px;top:215px;width:16px;height:16px;background:linear-gradient(135deg,#D8E4FE 0%,#C2D3FC 50%,#B4C8F8 100%);border:1px solid #fff;border-radius:2px;box-sizing:border-box;box-shadow:inset -1px -1px 0 #9EB4E8"></div>
<svg style="left:611px;top:215px;" width="16" height="16" viewBox="0 0 16 16"><path d="M4.0 10.0L8.0 6.0L12.0 10.0" fill="none" stroke="#3A4677" stroke-width="2.3"/></svg>
<div style="left:611px;top:436px;width:16px;height:16px;background:linear-gradient(135deg,#D8E4FE 0%,#C2D3FC 50%,#B4C8F8 100%);border:1px solid #fff;border-radius:2px;box-sizing:border-box;box-shadow:inset -1px -1px 0 #9EB4E8"></div>
<svg style="left:611px;top:436px;" width="16" height="16" viewBox="0 0 16 16"><path d="M4.0 6.0L8.0 10.0L12.0 6.0" fill="none" stroke="#3A4677" stroke-width="2.3"/></svg>
<div style="left:611px;top:232px;width:16px;height:157px;background:linear-gradient(90deg,#CCDAFD,#B9CDFA);border:1px solid #fff;border-radius:2px;box-sizing:border-box;box-shadow:inset -1px -1px 0 #A8BEF0"></div>
<div style="left:615px;top:307px;width:8px;height:1px;background:#EEF4FE;box-shadow:1px 1px 0 #9CB2E4"></div>
<div style="left:615px;top:309px;width:8px;height:1px;background:#EEF4FE;box-shadow:1px 1px 0 #9CB2E4"></div>
<div style="left:615px;top:311px;width:8px;height:1px;background:#EEF4FE;box-shadow:1px 1px 0 #9CB2E4"></div>
<div style="left:615px;top:313px;width:8px;height:1px;background:#EEF4FE;box-shadow:1px 1px 0 #9CB2E4"></div>
<div style="left:10px;top:452px;width:630px;height:17px;background:#EEECDF"></div>
<div style="left:31px;top:452px;width:580px;height:16px;background:linear-gradient(#F3F1EC,#FEFEFB)"></div>
<div style="left:31px;top:452px;width:16px;height:16px;background:linear-gradient(135deg,#F8F8F6,#ECEAE2);border:1px solid #E2E0D8;border-radius:2px;box-sizing:border-box"></div>
<svg style="left:31px;top:452px;" width="16" height="16" viewBox="0 0 16 16"><path d="M10.0 4.0L6.0 8.0L10.0 12.0" fill="none" stroke="#C8C6BC" stroke-width="2.3"/></svg>
<div style="left:595px;top:452px;width:16px;height:16px;background:linear-gradient(135deg,#F8F8F6,#ECEAE2);border:1px solid #E2E0D8;border-radius:2px;box-sizing:border-box"></div>
<svg style="left:595px;top:452px;" width="16" height="16" viewBox="0 0 16 16"><path d="M6.0 4.0L10.0 8.0L6.0 12.0" fill="none" stroke="#C8C6BC" stroke-width="2.3"/></svg>
<svg style="left:646px;top:189px;" width="196" height="283" viewBox="0 0 196 283"><path d="M0.5 282.5V6Q0.5 0.5 6 0.5H190Q195.5 0.5 195.5 6V282.5Z" fill="#EEECDF" stroke="#A5A391"/></svg>
<svg style="left:647px;top:189px;" width="195" height="24" viewBox="0 0 195 24"><defs><linearGradient id="gdis" x1="0" y1="0" x2="0" y2="1"><stop offset="0" stop-color="#fff"/><stop offset="1" stop-color="#EEECDF"/></linearGradient></defs><path d="M60 23V7Q60 1 66 1H136C150 1 152 22 163 22V23Z" fill="url(#gdis)"/><path d="M60 23V7Q60 0.5 66 0.5H136C150 0.5 152 22.5 163 22.5H194" fill="none" stroke="#A5A391"/><path d="M1 22.5H60" stroke="#A5A391"/></svg>
<svg style="left:652px;top:194px;" width="14" height="14" viewBox="0 0 14 14"><rect x="0.5" y="0.5" width="5" height="5" fill="#A8D0F0" stroke="#2060A0"/><rect x="0.5" y="8.5" width="5" height="5" fill="#A8D0F0" stroke="#2060A0"/><path d="M7 2H13M9 6H10M11 6H13M7 11H13" stroke="#2060A0"/><rect x="8" y="5" width="2" height="2" fill="none" stroke="#2060A0" stroke-width="0.7"/></svg>
<span class="t" style="left:670px;top:197px;;letter-spacing:0.050px">Outlin</span>
<svg style="left:712px;top:193px;" width="14" height="16" viewBox="0 0 14 16"><path d="M0.5 0.5H8.5L12.5 4.5V15.5H0.5Z" fill="#F8F8F4" stroke="#B89860"/><path d="M8.5 0.5V4.5H12.5" fill="#F0D8A0" stroke="#B89860"/><path d="M3 3.5H8M3 6H10" stroke="#5878C0" stroke-width="1.1"/><ellipse cx="2.5" cy="11.5" rx="1.3" ry="2.1" fill="none" stroke="#102878" stroke-width="1.2"/><path d="M6.5 9V14" stroke="#102878" stroke-width="1.5"/><ellipse cx="9.5" cy="11.5" rx="1.3" ry="2.1" fill="none" stroke="#102878" stroke-width="1.2"/></svg>
<span class="t" style="left:730px;top:197px;;letter-spacing:-0.403px">Disass</span>
<svg style="left:768px;top:196px;" width="12" height="11" viewBox="0 0 12 11"><path d="M0.5 2L2 0.5H3L5.5 3L8 0.5H9L10.5 2V3L8 5.5L10.5 8V9L9 10.5H8L5.5 8L3 10.5H2L0.5 9V8L3 5.5L0.5 3Z" fill="#fff" stroke="#6E6656" stroke-width="1"/></svg>
<div style="left:807px;top:194px;width:10px;height:4px;border:1px solid #7A6A50;background:#fff;box-sizing:border-box"></div>
<div style="left:825px;top:194px;width:10px;height:10px;border:1px solid #7A6A50;border-top-width:2px;background:#fff;box-sizing:border-box"></div>
<svg style="left:778px;top:219px;" width="14" height="14" viewBox="0 0 14 14"><path d="M4 0.5H10V7H13.5L7 13.5L0.5 7H4Z" fill="#8AA8E0" stroke="#4868A8"/></svg>
<svg style="left:801px;top:219px;" width="14" height="14" viewBox="0 0 14 14"><path d="M4 13.5H10V7H13.5L7 0.5L0.5 7H4Z" fill="#8AA8E0" stroke="#4868A8"/></svg>
<svg style="left:825px;top:219px;" width="10" height="6" viewBox="0 0 10 6"><path d="M0.5 0.5H9.5L5 5.5Z" fill="#fff" stroke="#6A6050"/></svg>
<div style="left:648px;top:238px;width:191px;height:1px;background:#A5A391"></div>
<div style="left:662px;top:239px;width:148px;height:213px;background:#fff"></div>
<div style="left:662px;top:239px;width:148px;height:17px;background:#EAF0FC"></div>
<div style="left:810px;top:239px;width:16px;height:213px;background:linear-gradient(90deg,#F3F1EC,#FEFEFB)"></div>
<div style="left:810px;top:239px;width:16px;height:16px;background:linear-gradient(135deg,#F8F8F6,#ECEAE2);border:1px solid #E2E0D8;border-radius:2px;box-sizing:border-box"></div>
<svg style="left:810px;top:239px;" width="16" height="16" viewBox="0 0 16 16"><path d="M4.0 10.0L8.0 6.0L12.0 10.0" fill="none" stroke="#C8C6BC" stroke-width="2.3"/></svg>
<div style="left:810px;top:436px;width:16px;height:16px;background:linear-gradient(135deg,#F8F8F6,#ECEAE2);border:1px solid #E2E0D8;border-radius:2px;box-sizing:border-box"></div>
<svg style="left:810px;top:436px;" width="16" height="16" viewBox="0 0 16 16"><path d="M4.0 6.0L8.0 10.0L12.0 6.0" fill="none" stroke="#C8C6BC" stroke-width="2.3"/></svg>
<div style="left:662px;top:452px;width:164px;height:16px;background:linear-gradient(#F3F1EC,#FEFEFB)"></div>
<div style="left:662px;top:452px;width:16px;height:16px;background:linear-gradient(135deg,#F8F8F6,#ECEAE2);border:1px solid #E2E0D8;border-radius:2px;box-sizing:border-box"></div>
<svg style="left:662px;top:452px;" width="16" height="16" viewBox="0 0 16 16"><path d="M10.0 4.0L6.0 8.0L10.0 12.0" fill="none" stroke="#C8C6BC" stroke-width="2.3"/></svg>
<div style="left:810px;top:452px;width:16px;height:16px;background:linear-gradient(135deg,#F8F8F6,#ECEAE2);border:1px solid #E2E0D8;border-radius:2px;box-sizing:border-box"></div>
<svg style="left:810px;top:452px;" width="16" height="16" viewBox="0 0 16 16"><path d="M6.0 4.0L10.0 8.0L6.0 12.0" fill="none" stroke="#C8C6BC" stroke-width="2.3"/></svg>
<svg style="left:7px;top:475px;" width="835" height="450" viewBox="0 0 835 450"><path d="M0.5 449.5V6Q0.5 0.5 6 0.5H829Q834.5 0.5 834.5 6V449.5Z" fill="#EEECDF" stroke="#A5A391"/></svg>
<svg style="left:73px;top:476px;" width="8" height="23" viewBox="0 0 8 23"><path d="M1.5 22V7Q1.5 1 7 0.5" fill="none" stroke="#A5A391"/></svg>
<svg style="left:128px;top:476px;" width="8" height="23" viewBox="0 0 8 23"><path d="M1.5 22V7Q1.5 1 7 0.5" fill="none" stroke="#A5A391"/></svg>
<svg style="left:199px;top:476px;" width="8" height="23" viewBox="0 0 8 23"><path d="M1.5 22V7Q1.5 1 7 0.5" fill="none" stroke="#A5A391"/></svg>
<svg style="left:285px;top:475px;" width="557" height="25" viewBox="0 0 557 25"><defs><linearGradient id="gmud" x1="0" y1="0" x2="0" y2="1"><stop offset="0" stop-color="#fff"/><stop offset="1" stop-color="#EEECDF"/></linearGradient></defs><path d="M1 24V7Q1 1 7 1H123C140 1 144 23 161 23V24Z" fill="url(#gmud)"/><path d="M0.5 23V7Q0.5 0.5 7 0.5H123C140 0.5 144 23.5 161 23.5H556" fill="none" stroke="#A5A391"/></svg>
<div style="left:8px;top:498px;width:278px;height:1px;background:#A5A391"></div>
<svg style="left:13px;top:480px;" width="14" height="13" viewBox="0 0 14 13"><rect x="0.5" y="0.5" width="13" height="9" fill="#C8D8F0" stroke="#3A5A98" stroke-width="1"/><path d="M3 4H9M3 6H7" stroke="#3A5A98"/><path d="M4 12H10M7 10V12" stroke="#3A5A98" stroke-width="1.5"/></svg>
<span class="t" style="left:31px;top:482px;;letter-spacing:-0.360px">Console</span>
<svg style="left:78px;top:479px;" width="15" height="15" viewBox="0 0 15 15"><rect x="4.5" y="1.5" width="10" height="13" fill="#F0F4F8" stroke="#A08050"/><rect x="7" y="0" width="5" height="3" fill="#A0A8B8"/><path d="M9 6H13M9 9H13M9 12H13" stroke="#5070A0"/><path d="M1 8L4 11L9 4" fill="none" stroke="#2060D0" stroke-width="2"/></svg>
<span class="t" style="left:98px;top:482px;;letter-spacing:-0.406px">Tasks</span>
<svg style="left:133px;top:479px;" width="14" height="15" viewBox="0 0 14 15"><rect x="0.5" y="0.5" width="12" height="14" fill="#F4F4F8" stroke="#A0A0B8"/><circle cx="5" cy="4.5" r="3" fill="#E04040"/><path d="M2 13L5 8L8 13Z" fill="#F0B030"/><path d="M10 3V12" stroke="#6080B0"/></svg>
<span class="t" style="left:152px;top:482px;;letter-spacing:-0.438px">Problems</span>
<svg style="left:203px;top:479px;" width="15" height="15" viewBox="0 0 15 15"><circle cx="7.5" cy="7.5" r="7" fill="#6A88C0" stroke="#3A5088"/><circle cx="6.5" cy="6.5" r="5" fill="#A0B8E0"/><path d="M6 3.5L11.5 7.5L6 11.5Z" fill="#fff"/></svg>
<span class="t" style="left:222px;top:482px;;letter-spacing:-0.124px">Executables</span>
<svg style="left:290px;top:479px;" width="14" height="15" viewBox="0 0 14 15"><rect x="0.5" y="0.5" width="11" height="11" fill="#F4F4F4" stroke="#606070"/><rect x="1" y="1" width="10" height="2" fill="#8890A8"/><path d="M9 7L13 14M7 11L13 9M11 7V14" stroke="#404060"/><circle cx="10" cy="10.5" r="2" fill="#E8E8F0" stroke="#404060" stroke-width="0.8"/></svg>
<span class="t" style="left:309px;top:482px;;letter-spacing:-0.217px">Mudflap Violations</span>
<svg style="left:402px;top:482px;" width="12" height="11" viewBox="0 0 12 11"><path d="M0.5 2L2 0.5H3L5.5 3L8 0.5H9L10.5 2V3L8 5.5L10.5 8V9L9 10.5H8L5.5 8L3 10.5H2L0.5 9V8L3 5.5L0.5 3Z" fill="#fff" stroke="#6E6656" stroke-width="1"/></svg>
<svg style="left:705px;top:479px;" width="17" height="16" viewBox="0 0 17 16"><path d="M0.5 0.5H8L11.5 4V12.5H0.5Z" fill="#FFF8E0" stroke="#B09050"/><path d="M2 4H8M2 6H9M2 8H7" stroke="#6080B0"/><path d="M9 5H12V9H14L10.5 12.5L7 9H9Z" fill="#60A8D0" stroke="#2070A0" stroke-width="0.8"/><rect x="5.5" y="11.5" width="11" height="4" fill="#fff" stroke="#3060A0"/><path d="M7 13.5H15" stroke="#3060A0" stroke-dasharray="1 1"/></svg>
<svg style="left:728px;top:485px;" width="5" height="3" viewBox="0 0 5 3"><path d="M0 0H5L2.5 3Z" fill="#000"/></svg>
<svg style="left:742px;top:479px;" width="15" height="16" viewBox="0 0 15 16"><rect x="0.5" y="0.5" width="14" height="15" fill="#E8EEF8" stroke="#7080A0"/><rect x="9" y="1" width="5" height="14" fill="#D0D8E8"/><rect x="10.5" y="3.5" width="2" height="2" fill="#2050A0"/><rect x="10.5" y="10.5" width="2" height="2" fill="#2050A0"/><rect x="1.5" y="9.5" width="6" height="5" fill="#F0C040" stroke="#A07010"/><path d="M3 9.5V7.5Q4.5 5.5 6 7.5V9.5" fill="none" stroke="#A07010"/></svg>
<svg style="left:765px;top:479px;" width="16" height="16" viewBox="0 0 16 16"><path d="M2 8.5Q2 3.5 8 3.5" fill="none" stroke="#B07810" stroke-width="3.2"/><path d="M2 8.5Q2 3.5 8 3.5" fill="none" stroke="#F8D040" stroke-width="1.6"/><path d="M7.5 0.5L11.5 3.5L7.5 6.5Z" fill="#F8D040" stroke="#B07810" stroke-width="0.8"/><path d="M14 7.5Q14 12.5 8 12.5" fill="none" stroke="#B07810" stroke-width="3.2"/><path d="M14 7.5Q14 12.5 8 12.5" fill="none" stroke="#F8D040" stroke-width="1.6"/><path d="M8.5 9.5L4.5 12.5L8.5 15.5Z" fill="#F8D040" stroke="#B07810" stroke-width="0.8"/></svg>
<svg style="left:788px;top:479px;" width="10" height="6" viewBox="0 0 10 6"><path d="M0.5 0.5H9.5L5 5.5Z" fill="#fff" stroke="#6A6050"/></svg>
<div style="left:807px;top:480px;width:10px;height:4px;border:1px solid #7A6A50;background:#fff;box-sizing:border-box"></div>
<div style="left:825px;top:480px;width:10px;height:10px;border:1px solid #7A6A50;border-top-width:2px;background:#fff;box-sizing:border-box"></div>
<span class="t" style="left:15px;top:507px;;letter-spacing:-0.014px">C:\ide-4.6-workspace\AQNXCProject/output.mudflap</span>
<div style="left:336px;top:527px;width:1px;height:13px;background:#C7C5B2;box-shadow:1px 0 0 #fff"></div>
<div style="left:636px;top:527px;width:1px;height:13px;background:#C7C5B2;box-shadow:1px 0 0 #fff"></div>
<div style="left:686px;top:527px;width:1px;height:13px;background:#C7C5B2;box-shadow:1px 0 0 #fff"></div>
<div style="left:785px;top:527px;width:1px;height:13px;background:#C7C5B2;box-shadow:1px 0 0 #fff"></div>
<span class="t" style="left:24px;top:528px;;letter-spacing:-0.250px">Violation</span>
<span class="t" style="left:346px;top:528px;">Location</span>
<span class="t" style="left:646px;top:528px;">Thread</span>
<span class="t" style="left:696px;top:528px;">Time</span>
<div style="left:15px;top:541px;width:803px;height:1px;background:#E2DECD"></div>
<div style="left:15px;top:542px;width:803px;height:1px;background:#D6D2C2"></div>
<div style="left:15px;top:543px;width:803px;height:1px;background:#CBC7B8"></div>
<div style="left:15px;top:544px;width:803px;height:368px;background:#fff"></div>
<div style="left:818px;top:524px;width:16px;height:388px;background:linear-gradient(90deg,#F3F1EC,#FEFEFB)"></div>
<div style="left:818px;top:524px;width:16px;height:16px;background:linear-gradient(135deg,#D8E4FE 0%,#C2D3FC 50%,#B4C8F8 100%);border:1px solid #fff;border-radius:2px;box-sizing:border-box;box-shadow:inset -1px -1px 0 #9EB4E8"></div>
<svg style="left:818px;top:524px;" width="16" height="16" viewBox="0 0 16 16"><path d="M4.0 10.0L8.0 6.0L12.0 10.0" fill="none" stroke="#3A4677" stroke-width="2.3"/></svg>
<div style="left:818px;top:896px;width:16px;height:16px;background:linear-gradient(135deg,#D8E4FE 0%,#C2D3FC 50%,#B4C8F8 100%);border:1px solid #fff;border-radius:2px;box-sizing:border-box;box-shadow:inset -1px -1px 0 #9EB4E8"></div>
<svg style="left:818px;top:896px;" width="16" height="16" viewBox="0 0 16 16"><path d="M4.0 6.0L8.0 10.0L12.0 6.0" fill="none" stroke="#3A4677" stroke-width="2.3"/></svg>
<div style="left:818px;top:541px;width:16px;height:322px;background:linear-gradient(90deg,#CCDAFD,#B9CDFA);border:1px solid #fff;border-radius:2px;box-sizing:border-box;box-shadow:inset -1px -1px 0 #A8BEF0"></div>
<div style="left:822px;top:699px;width:8px;height:1px;background:#EEF4FE;box-shadow:1px 1px 0 #9CB2E4"></div>
<div style="left:822px;top:701px;width:8px;height:1px;background:#EEF4FE;box-shadow:1px 1px 0 #9CB2E4"></div>
<div style="left:822px;top:703px;width:8px;height:1px;background:#EEF4FE;box-shadow:1px 1px 0 #9CB2E4"></div>
<div style="left:822px;top:705px;width:8px;height:1px;background:#EEF4FE;box-shadow:1px 1px 0 #9CB2E4"></div>
<div style="left:0px;top:0px;width:818px;height:912px;overflow:hidden">
<div style="left:31px;top:552px;width:7px;height:1px;background:repeating-linear-gradient(90deg,#A0A0A0 0 1px,transparent 1px 2px)"></div>
<div style="left:50px;top:569px;width:7px;height:1px;background:repeating-linear-gradient(90deg,#A0A0A0 0 1px,transparent 1px 2px)"></div>
<div style="left:64px;top:586px;width:12px;height:1px;background:repeating-linear-gradient(90deg,#A0A0A0 0 1px,transparent 1px 2px)"></div>
<div style="left:64px;top:603px;width:12px;height:1px;background:repeating-linear-gradient(90deg,#A0A0A0 0 1px,transparent 1px 2px)"></div>
<div style="left:64px;top:620px;width:12px;height:1px;background:repeating-linear-gradient(90deg,#A0A0A0 0 1px,transparent 1px 2px)"></div>
<div style="left:64px;top:637px;width:12px;height:1px;background:repeating-linear-gradient(90deg,#A0A0A0 0 1px,transparent 1px 2px)"></div>
<div style="left:50px;top:654px;width:7px;height:1px;background:repeating-linear-gradient(90deg,#A0A0A0 0 1px,transparent 1px 2px)"></div>
<div style="left:69px;top:671px;width:7px;height:1px;background:repeating-linear-gradient(90deg,#A0A0A0 0 1px,transparent 1px 2px)"></div>
<div style="left:31px;top:688px;width:7px;height:1px;background:repeating-linear-gradient(90deg,#A0A0A0 0 1px,transparent 1px 2px)"></div>
<div style="left:50px;top:705px;width:7px;height:1px;background:repeating-linear-gradient(90deg,#A0A0A0 0 1px,transparent 1px 2px)"></div>
<div style="left:64px;top:722px;width:12px;height:1px;background:repeating-linear-gradient(90deg,#A0A0A0 0 1px,transparent 1px 2px)"></div>
<div style="left:64px;top:739px;width:12px;height:1px;background:repeating-linear-gradient(90deg,#A0A0A0 0 1px,transparent 1px 2px)"></div>
<div style="left:64px;top:756px;width:12px;height:1px;background:repeating-linear-gradient(90deg,#A0A0A0 0 1px,transparent 1px 2px)"></div>
<div style="left:64px;top:773px;width:12px;height:1px;background:repeating-linear-gradient(90deg,#A0A0A0 0 1px,transparent 1px 2px)"></div>
<div style="left:50px;top:790px;width:7px;height:1px;background:repeating-linear-gradient(90deg,#A0A0A0 0 1px,transparent 1px 2px)"></div>
<div style="left:69px;top:807px;width:7px;height:1px;background:repeating-linear-gradient(90deg,#A0A0A0 0 1px,transparent 1px 2px)"></div>
<div style="left:83px;top:824px;width:12px;height:1px;background:repeating-linear-gradient(90deg,#A0A0A0 0 1px,transparent 1px 2px)"></div>
<div style="left:83px;top:841px;width:12px;height:1px;background:repeating-linear-gradient(90deg,#A0A0A0 0 1px,transparent 1px 2px)"></div>
<div style="left:83px;top:858px;width:12px;height:1px;background:repeating-linear-gradient(90deg,#A0A0A0 0 1px,transparent 1px 2px)"></div>
<div style="left:83px;top:875px;width:12px;height:1px;background:repeating-linear-gradient(90deg,#A0A0A0 0 1px,transparent 1px 2px)"></div>
<div style="left:31px;top:892px;width:7px;height:1px;background:repeating-linear-gradient(90deg,#A0A0A0 0 1px,transparent 1px 2px)"></div>
<div style="left:31px;top:909px;width:7px;height:1px;background:repeating-linear-gradient(90deg,#A0A0A0 0 1px,transparent 1px 2px)"></div>
<div style="left:45px;top:561px;width:1px;height:94px;background:repeating-linear-gradient(#A0A0A0 0 1px,transparent 1px 2px)"></div>
<div style="left:64px;top:578px;width:1px;height:60px;background:repeating-linear-gradient(#A0A0A0 0 1px,transparent 1px 2px)"></div>
<div style="left:64px;top:663px;width:1px;height:9px;background:repeating-linear-gradient(#A0A0A0 0 1px,transparent 1px 2px)"></div>
<div style="left:45px;top:697px;width:1px;height:94px;background:repeating-linear-gradient(#A0A0A0 0 1px,transparent 1px 2px)"></div>
<div style="left:64px;top:714px;width:1px;height:60px;background:repeating-linear-gradient(#A0A0A0 0 1px,transparent 1px 2px)"></div>
<div style="left:64px;top:799px;width:1px;height:9px;background:repeating-linear-gradient(#A0A0A0 0 1px,transparent 1px 2px)"></div>
<div style="left:83px;top:816px;width:1px;height:60px;background:repeating-linear-gradient(#A0A0A0 0 1px,transparent 1px 2px)"></div>
<div style="left:26px;top:552px;width:1px;height:357px;background:repeating-linear-gradient(#A0A0A0 0 1px,transparent 1px 2px)"></div>
<div style="left:22px;top:548px;width:9px;height:9px;background:linear-gradient(135deg,#fff,#E4E2D6);border:1px solid #7F9DB9;box-sizing:border-box"><div style="left:1px;top:3px;width:5px;height:1px;background:#000"></div></div>
<div style="left:41px;top:565px;width:9px;height:9px;background:linear-gradient(135deg,#fff,#E4E2D6);border:1px solid #7F9DB9;box-sizing:border-box"><div style="left:1px;top:3px;width:5px;height:1px;background:#000"></div></div>
<div style="left:41px;top:650px;width:9px;height:9px;background:linear-gradient(135deg,#fff,#E4E2D6);border:1px solid #7F9DB9;box-sizing:border-box"><div style="left:1px;top:3px;width:5px;height:1px;background:#000"></div></div>
<div style="left:60px;top:667px;width:9px;height:9px;background:linear-gradient(135deg,#fff,#E4E2D6);border:1px solid #7F9DB9;box-sizing:border-box"><div style="left:1px;top:3px;width:5px;height:1px;background:#000"></div><div style="left:3px;top:1px;width:1px;height:5px;background:#000"></div></div>
<div style="left:22px;top:684px;width:9px;height:9px;background:linear-gradient(135deg,#fff,#E4E2D6);border:1px solid #7F9DB9;box-sizing:border-box"><div style="left:1px;top:3px;width:5px;height:1px;background:#000"></div></div>
<div style="left:41px;top:701px;width:9px;height:9px;background:linear-gradient(135deg,#fff,#E4E2D6);border:1px solid #7F9DB9;box-sizing:border-box"><div style="left:1px;top:3px;width:5px;height:1px;background:#000"></div></div>
<div style="left:41px;top:786px;width:9px;height:9px;background:linear-gradient(135deg,#fff,#E4E2D6);border:1px solid #7F9DB9;box-sizing:border-box"><div style="left:1px;top:3px;width:5px;height:1px;background:#000"></div></div>
<div style="left:60px;top:803px;width:9px;height:9px;background:linear-gradient(135deg,#fff,#E4E2D6);border:1px solid #7F9DB9;box-sizing:border-box"><div style="left:1px;top:3px;width:5px;height:1px;background:#000"></div></div>
<div style="left:22px;top:888px;width:9px;height:9px;background:linear-gradient(135deg,#fff,#E4E2D6);border:1px solid #7F9DB9;box-sizing:border-box"><div style="left:1px;top:3px;width:5px;height:1px;background:#000"></div><div style="left:3px;top:1px;width:1px;height:5px;background:#000"></div></div>
<div style="left:22px;top:905px;width:9px;height:9px;background:linear-gradient(135deg,#fff,#E4E2D6);border:1px solid #7F9DB9;box-sizing:border-box"><div style="left:1px;top:3px;width:5px;height:1px;background:#000"></div><div style="left:3px;top:1px;width:1px;height:5px;background:#000"></div></div>
<svg style="left:40px;top:546px;" width="12" height="12" viewBox="0 0 12 12"><circle cx="6" cy="6" r="5.7" fill="#E83838"/><circle cx="6" cy="5" r="4" fill="#F26060"/><path d="M3.5 3.5L8.5 8.5M8.5 3.5L3.5 8.5" stroke="#fff" stroke-width="1.6"/></svg>
<div style="left:56px;top:544px;width:99px;height:17px;background:#EEECDF"></div>
<span class="t" style="left:57px;top:547px;">write out of bounds</span>
<span class="t" style="left:342px;top:547px;;letter-spacing:-0.092px">C:/ide-4.6-workspace/AQNXCProject/AQNXCProject.c:13</span>
<span class="t" style="left:643px;top:547px;">1</span>
<span class="t" style="left:693px;top:547px;">11:48.29.347</span>
<svg style="left:58px;top:563px;" width="13" height="11" viewBox="0 0 13 11"><rect x="0" y="0" width="12" height="2" fill="#1848A8"/><rect x="0" y="2" width="12" height="1" fill="#88A8E0"/><rect x="0" y="4" width="12" height="2" fill="#1848A8"/><rect x="0" y="6" width="12" height="1" fill="#88A8E0"/><rect x="0" y="8" width="12" height="2" fill="#1848A8"/><rect x="0" y="10" width="12" height="1" fill="#88A8E0"/></svg>
<span class="t" style="left:76px;top:564px;">backtrace</span>
<span class="t" style="left:342px;top:564px;">0xb8207c02</span>
<span class="t" style="left:693px;top:564px;">11:48.29.347</span>
<svg style="left:77px;top:580px;" width="13" height="11" viewBox="0 0 13 11"><rect x="0" y="0" width="12" height="2" fill="#1848A8"/><rect x="0" y="2" width="12" height="1" fill="#88A8E0"/><rect x="0" y="4" width="12" height="2" fill="#1848A8"/><rect x="0" y="6" width="12" height="1" fill="#88A8E0"/><rect x="0" y="8" width="12" height="2" fill="#1848A8"/><rect x="0" y="10" width="12" height="1" fill="#88A8E0"/></svg>
<span class="t" style="left:95px;top:581px;">[0] libmudflapth.so.0 (__mfu_check)</span>
<span class="t" style="left:342px;top:581px;">libmudflapth.so.0(__mfu_check+0x456) [0xb8207c02]</span>
<svg style="left:77px;top:597px;" width="13" height="11" viewBox="0 0 13 11"><rect x="0" y="0" width="12" height="2" fill="#1848A8"/><rect x="0" y="2" width="12" height="1" fill="#88A8E0"/><rect x="0" y="4" width="12" height="2" fill="#1848A8"/><rect x="0" y="6" width="12" height="1" fill="#88A8E0"/><rect x="0" y="8" width="12" height="2" fill="#1848A8"/><rect x="0" y="10" width="12" height="1" fill="#88A8E0"/></svg>
<span class="t" style="left:95px;top:598px;">[1] libmudflapth.so.0 (__mf_check)</span>
<span class="t" style="left:342px;top:598px;">libmudflapth.so.0(__mf_check+0x3e) [0xb8207d9e]</span>
<svg style="left:77px;top:614px;" width="13" height="11" viewBox="0 0 13 11"><rect x="0" y="0" width="12" height="2" fill="#1848A8"/><rect x="0" y="2" width="12" height="1" fill="#88A8E0"/><rect x="0" y="4" width="12" height="2" fill="#1848A8"/><rect x="0" y="6" width="12" height="1" fill="#88A8E0"/><rect x="0" y="8" width="12" height="2" fill="#1848A8"/><rect x="0" y="10" width="12" height="1" fill="#88A8E0"/></svg>
<span class="t" style="left:95px;top:615px;">[2] AQNXCProject (main)</span>
<span class="t" style="left:342px;top:615px;">AQNXCProject(main+0x70) [0x80490ac]</span>
<svg style="left:77px;top:631px;" width="13" height="11" viewBox="0 0 13 11"><rect x="0" y="0" width="12" height="2" fill="#1848A8"/><rect x="0" y="2" width="12" height="1" fill="#88A8E0"/><rect x="0" y="4" width="12" height="2" fill="#1848A8"/><rect x="0" y="6" width="12" height="1" fill="#88A8E0"/><rect x="0" y="8" width="12" height="2" fill="#1848A8"/><rect x="0" y="10" width="12" height="1" fill="#88A8E0"/></svg>
<span class="t" style="left:95px;top:632px;">[3] libmudflapth.so.0 (__wrap_main)</span>
<span class="t" style="left:342px;top:632px;">libmudflapth.so.0(__wrap_main+0x41) [0xb8207659]</span>
<svg style="left:57px;top:648px;" width="15" height="15" viewBox="0 0 15 15"><rect x="0.5" y="0.5" width="14" height="14" fill="#EEF4FC" stroke="#506898"/><rect x="1" y="1" width="13" height="2" fill="#7898D0"/><circle cx="7.5" cy="6" r="1.6" fill="none" stroke="#2858A8" stroke-width="1.2"/><circle cx="4.5" cy="11" r="1.6" fill="none" stroke="#2858A8" stroke-width="1.2"/><circle cx="10.5" cy="11" r="1.6" fill="none" stroke="#2858A8" stroke-width="1.2"/></svg>
<span class="t" style="left:76px;top:649px;">malloc region[10] (heap) accessed at [10]</span>
<span class="t" style="left:342px;top:649px;">malloc region</span>
<svg style="left:78px;top:668px;" width="11" height="9" viewBox="0 0 11 9"><path d="M0.5 1L4 1L6.5 4.5L4 8H0.5L3 4.5Z" fill="#5878E0" stroke="#2040B0" stroke-width="0.6"/><path d="M4.5 1L8 1L10.5 4.5L8 8H4.5L7 4.5Z" fill="#90A8F0" stroke="#2040B0" stroke-width="0.6"/></svg>
<span class="t" style="left:95px;top:666px;">alloc backtrace</span>
<span class="t" style="left:342px;top:666px;">0xb820758e</span>
<span class="t" style="left:643px;top:666px;">1</span>
<span class="t" style="left:693px;top:666px;">11:48.29.347</span>
<svg style="left:40px;top:683px;" width="11" height="11" viewBox="0 0 11 11"><path d="M5.5 0.5L10.5 10.5H0.5Z" fill="#F8C848" stroke="#D08818" stroke-linejoin="round"/><path d="M5.5 3.5V7" stroke="#903010" stroke-width="1.5"/><rect x="4.8" y="8" width="1.4" height="1.4" fill="#903010"/></svg>
<span class="t" style="left:57px;top:683px;">memory leak of size 20</span>
<svg style="left:59px;top:702px;" width="11" height="9" viewBox="0 0 11 9"><path d="M0.5 1L4 1L6.5 4.5L4 8H0.5L3 4.5Z" fill="#5878E0" stroke="#2040B0" stroke-width="0.6"/><path d="M4.5 1L8 1L10.5 4.5L8 8H4.5L7 4.5Z" fill="#90A8F0" stroke="#2040B0" stroke-width="0.6"/></svg>
<span class="t" style="left:76px;top:700px;">alloc backtrace</span>
<span class="t" style="left:342px;top:700px;">0xb820758e</span>
<span class="t" style="left:643px;top:700px;">1</span>
<span class="t" style="left:693px;top:700px;">11:48.29.344</span>
<svg style="left:77px;top:716px;" width="13" height="11" viewBox="0 0 13 11"><rect x="0" y="0" width="12" height="2" fill="#1848A8"/><rect x="0" y="2" width="12" height="1" fill="#88A8E0"/><rect x="0" y="4" width="12" height="2" fill="#1848A8"/><rect x="0" y="6" width="12" height="1" fill="#88A8E0"/><rect x="0" y="8" width="12" height="2" fill="#1848A8"/><rect x="0" y="10" width="12" height="1" fill="#88A8E0"/></svg>
<span class="t" style="left:95px;top:717px;">[0] libmudflapth.so.0 (__mf_register)</span>
<span class="t" style="left:342px;top:717px;">libmudflapth.so.0(__mf_register+0x3e) [0xb820758e]</span>
<svg style="left:77px;top:733px;" width="13" height="11" viewBox="0 0 13 11"><rect x="0" y="0" width="12" height="2" fill="#1848A8"/><rect x="0" y="2" width="12" height="1" fill="#88A8E0"/><rect x="0" y="4" width="12" height="2" fill="#1848A8"/><rect x="0" y="6" width="12" height="1" fill="#88A8E0"/><rect x="0" y="8" width="12" height="2" fill="#1848A8"/><rect x="0" y="10" width="12" height="1" fill="#88A8E0"/></svg>
<span class="t" style="left:95px;top:734px;">[1] libmudflapth.so.0 (__real_malloc)</span>
<span class="t" style="left:342px;top:734px;">libmudflapth.so.0(__real_malloc+0xba) [0xb8208b6a]</span>
<svg style="left:77px;top:750px;" width="13" height="11" viewBox="0 0 13 11"><rect x="0" y="0" width="12" height="2" fill="#1848A8"/><rect x="0" y="2" width="12" height="1" fill="#88A8E0"/><rect x="0" y="4" width="12" height="2" fill="#1848A8"/><rect x="0" y="6" width="12" height="1" fill="#88A8E0"/><rect x="0" y="8" width="12" height="2" fill="#1848A8"/><rect x="0" y="10" width="12" height="1" fill="#88A8E0"/></svg>
<span class="t" style="left:95px;top:751px;">[2] libc.so.3 (atexit)</span>
<span class="t" style="left:342px;top:751px;">libc.so.3(atexit+0x19) [0xb032ac99]</span>
<svg style="left:77px;top:767px;" width="13" height="11" viewBox="0 0 13 11"><rect x="0" y="0" width="12" height="2" fill="#1848A8"/><rect x="0" y="2" width="12" height="1" fill="#88A8E0"/><rect x="0" y="4" width="12" height="2" fill="#1848A8"/><rect x="0" y="6" width="12" height="1" fill="#88A8E0"/><rect x="0" y="8" width="12" height="2" fill="#1848A8"/><rect x="0" y="10" width="12" height="1" fill="#88A8E0"/></svg>
<span class="t" style="left:95px;top:768px;">[3] libc.so.3 (_init_libc)</span>
<span class="t" style="left:342px;top:768px;">libc.so.3(_init_libc+0x33) [0xb03641b3]</span>
<svg style="left:57px;top:784px;" width="15" height="15" viewBox="0 0 15 15"><rect x="0.5" y="0.5" width="14" height="14" fill="#EEF4FC" stroke="#506898"/><rect x="1" y="1" width="13" height="2" fill="#7898D0"/><circle cx="7.5" cy="6" r="1.6" fill="none" stroke="#2858A8" stroke-width="1.2"/><circle cx="4.5" cy="11" r="1.6" fill="none" stroke="#2858A8" stroke-width="1.2"/><circle cx="10.5" cy="11" r="1.6" fill="none" stroke="#2858A8" stroke-width="1.2"/></svg>
<span class="t" style="left:76px;top:785px;">malloc region[20] (heap) accessed at [20]</span>
<span class="t" style="left:342px;top:785px;">malloc region</span>
<svg style="left:78px;top:804px;" width="11" height="9" viewBox="0 0 11 9"><path d="M0.5 1L4 1L6.5 4.5L4 8H0.5L3 4.5Z" fill="#5878E0" stroke="#2040B0" stroke-width="0.6"/><path d="M4.5 1L8 1L10.5 4.5L8 8H4.5L7 4.5Z" fill="#90A8F0" stroke="#2040B0" stroke-width="0.6"/></svg>
<span class="t" style="left:95px;top:802px;">alloc backtrace</span>
<span class="t" style="left:342px;top:802px;">0xb820758e</span>
<span class="t" style="left:643px;top:802px;">1</span>
<span class="t" style="left:693px;top:802px;">11:48.29.344</span>
<svg style="left:96px;top:818px;" width="13" height="11" viewBox="0 0 13 11"><rect x="0" y="0" width="12" height="2" fill="#1848A8"/><rect x="0" y="2" width="12" height="1" fill="#88A8E0"/><rect x="0" y="4" width="12" height="2" fill="#1848A8"/><rect x="0" y="6" width="12" height="1" fill="#88A8E0"/><rect x="0" y="8" width="12" height="2" fill="#1848A8"/><rect x="0" y="10" width="12" height="1" fill="#88A8E0"/></svg>
<span class="t" style="left:115px;top:819px;">[0] libmudflapth.so.0 (__mf_register)</span>
<span class="t" style="left:342px;top:819px;">libmudflapth.so.0(__mf_register+0x3e) [0xb820758e]</span>
<svg style="left:96px;top:835px;" width="13" height="11" viewBox="0 0 13 11"><rect x="0" y="0" width="12" height="2" fill="#1848A8"/><rect x="0" y="2" width="12" height="1" fill="#88A8E0"/><rect x="0" y="4" width="12" height="2" fill="#1848A8"/><rect x="0" y="6" width="12" height="1" fill="#88A8E0"/><rect x="0" y="8" width="12" height="2" fill="#1848A8"/><rect x="0" y="10" width="12" height="1" fill="#88A8E0"/></svg>
<span class="t" style="left:115px;top:836px;">[1] libmudflapth.so.0 (__real_malloc)</span>
<span class="t" style="left:342px;top:836px;">libmudflapth.so.0(__real_malloc+0xba) [0xb8208b6a]</span>
<svg style="left:96px;top:852px;" width="13" height="11" viewBox="0 0 13 11"><rect x="0" y="0" width="12" height="2" fill="#1848A8"/><rect x="0" y="2" width="12" height="1" fill="#88A8E0"/><rect x="0" y="4" width="12" height="2" fill="#1848A8"/><rect x="0" y="6" width="12" height="1" fill="#88A8E0"/><rect x="0" y="8" width="12" height="2" fill="#1848A8"/><rect x="0" y="10" width="12" height="1" fill="#88A8E0"/></svg>
<span class="t" style="left:115px;top:853px;">[2] libc.so.3 (atexit)</span>
<span class="t" style="left:342px;top:853px;">libc.so.3(atexit+0x19) [0xb032ac99]</span>
<svg style="left:96px;top:869px;" width="13" height="11" viewBox="0 0 13 11"><rect x="0" y="0" width="12" height="2" fill="#1848A8"/><rect x="0" y="2" width="12" height="1" fill="#88A8E0"/><rect x="0" y="4" width="12" height="2" fill="#1848A8"/><rect x="0" y="6" width="12" height="1" fill="#88A8E0"/><rect x="0" y="8" width="12" height="2" fill="#1848A8"/><rect x="0" y="10" width="12" height="1" fill="#88A8E0"/></svg>
<span class="t" style="left:115px;top:870px;">[3] libc.so.3 (_init_libc)</span>
<span class="t" style="left:342px;top:870px;">libc.so.3(_init_libc+0x33) [0xb03641b3]</span>
<svg style="left:40px;top:887px;" width="11" height="11" viewBox="0 0 11 11"><path d="M5.5 0.5L10.5 10.5H0.5Z" fill="#F8C848" stroke="#D08818" stroke-linejoin="round"/><path d="M5.5 3.5V7" stroke="#903010" stroke-width="1.5"/><rect x="4.8" y="8" width="1.4" height="1.4" fill="#903010"/></svg>
<span class="t" style="left:57px;top:887px;">memory leak of size 20</span>
<svg style="left:40px;top:904px;" width="11" height="11" viewBox="0 0 11 11"><path d="M5.5 0.5L10.5 10.5H0.5Z" fill="#F8C848" stroke="#D08818" stroke-linejoin="round"/><path d="M5.5 3.5V7" stroke="#903010" stroke-width="1.5"/><rect x="4.8" y="8" width="1.4" height="1.4" fill="#903010"/></svg>
<span class="t" style="left:57px;top:904px;">memory leak of size 20</span>
</div>
<div style="left:10px;top:932px;width:2px;height:2px;background:#A6A08B;box-shadow:1px 1px 0 #fff"></div>
<div style="left:10px;top:936px;width:2px;height:2px;background:#A6A08B;box-shadow:1px 1px 0 #fff"></div>
<div style="left:10px;top:940px;width:2px;height:2px;background:#A6A08B;box-shadow:1px 1px 0 #fff"></div>
<div style="left:10px;top:944px;width:2px;height:2px;background:#A6A08B;box-shadow:1px 1px 0 #fff"></div>
<svg style="left:21px;top:931px;" width="17" height="14" viewBox="0 0 17 14"><rect x="1.5" y="3.5" width="6" height="10" fill="#E8F2FC" stroke="#807060"/><rect x="2" y="4" width="5" height="2" fill="#4878C8"/><path d="M12 0L15 3L12 6L9 3Z" fill="#F8E080" stroke="#C09010"/></svg>
<div style="left:333px;top:927px;width:1px;height:26px;background:#A4A494;box-shadow:1px 0 0 #fff"></div>
<div style="left:422px;top:927px;width:1px;height:26px;background:#A4A494;box-shadow:1px 0 0 #fff"></div>
<div style="left:506px;top:927px;width:1px;height:26px;background:#A4A494;box-shadow:1px 0 0 #fff"></div>
<span class="t" style="left:341px;top:934px;;letter-spacing:0.049px">Writable</span>
<span class="t" style="left:429px;top:934px;;letter-spacing:0.099px">Smart Insert</span>
<span class="t" style="left:514px;top:934px;;letter-spacing:-0.046px">13 : 1</span>
<div style="left:593px;top:928px;width:2px;height:2px;background:#A6A08B;box-shadow:1px 1px 0 #fff"></div>
<div style="left:593px;top:932px;width:2px;height:2px;background:#A6A08B;box-shadow:1px 1px 0 #fff"></div>
<div style="left:593px;top:936px;width:2px;height:2px;background:#A6A08B;box-shadow:1px 1px 0 #fff"></div>
<div style="left:593px;top:940px;width:2px;height:2px;background:#A6A08B;box-shadow:1px 1px 0 #fff"></div>
<div style="left:593px;top:944px;width:2px;height:2px;background:#A6A08B;box-shadow:1px 1px 0 #fff"></div>
</body></html>
